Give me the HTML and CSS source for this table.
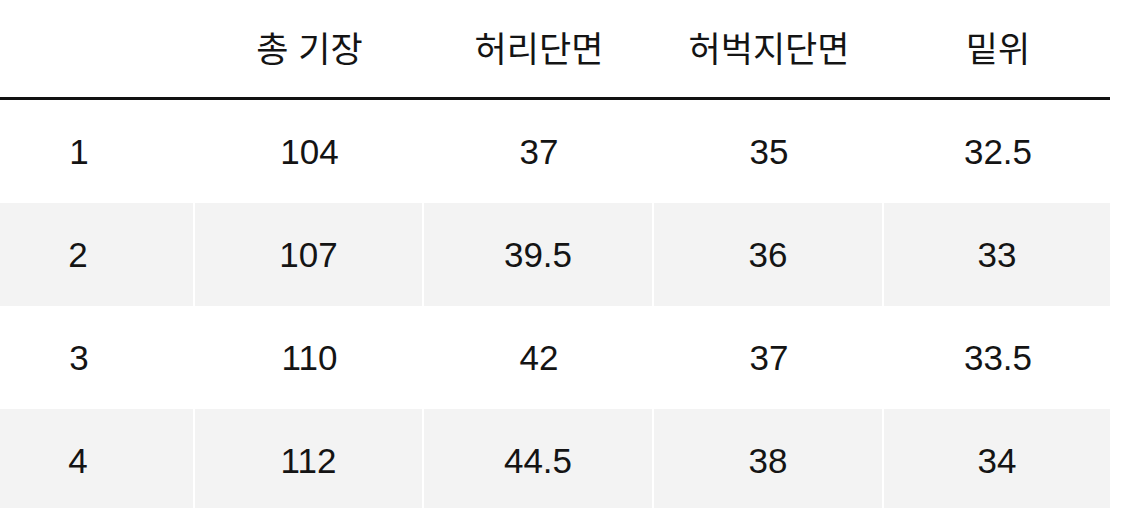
FILE: index.html
```html
<!DOCTYPE html>
<html lang="ko">
<head>
<meta charset="utf-8">
<title>사이즈표</title>
<link rel="stylesheet" href="styles.css">
</head>
<body>
<div class="size-table">
  <div class="row head">
    <div class="cell first"></div>
    <div class="cell">총 기장</div>
    <div class="cell">허리단면</div>
    <div class="cell">허벅지단면</div>
    <div class="cell">밑위</div>
  </div>
  <div class="row light">
    <div class="cell first">1</div>
    <div class="cell">104</div>
    <div class="cell">37</div>
    <div class="cell">35</div>
    <div class="cell">32.5</div>
  </div>
  <div class="row shade">
    <div class="cell first">2</div>
    <div class="cell">107</div>
    <div class="cell">39.5</div>
    <div class="cell">36</div>
    <div class="cell">33</div>
  </div>
  <div class="row light">
    <div class="cell first">3</div>
    <div class="cell">110</div>
    <div class="cell">42</div>
    <div class="cell">37</div>
    <div class="cell">33.5</div>
  </div>
  <div class="row shade">
    <div class="cell first">4</div>
    <div class="cell">112</div>
    <div class="cell">44.5</div>
    <div class="cell">38</div>
    <div class="cell">34</div>
  </div>
</div>
</body>
</html>
```

FILE: styles.css
```css
html, body {
  margin: 0;
  padding: 0;
  background: #ffffff;
}

body {
  font-family: "Liberation Sans", "Noto Sans CJK KR", sans-serif;
  color: #141414;
  overflow: hidden;
}

.size-table {
  width: 1110px;
}

.row {
  display: grid;
  grid-template-columns: 193px 227px 228px 228px 226px;
  column-gap: 2px;
  height: 103px;
}

.row.head {
  height: 97px;
  border-bottom: 3px solid #111111;
  font-family: "Noto Sans CJK KR", sans-serif;
  border-left: 1px solid #c6c6c6;
  margin-left: -1px;
  padding-left: 1px;
}

.row.light {
  border-left: 1px solid #c6c6c6;
  margin-left: -1px;
  padding-left: 1px;
}

.cell {
  display: flex;
  align-items: center;
  justify-content: center;
  font-size: 35px;
}

.row.head .cell {
  font-size: 35px;
  padding-bottom: 4px;
}

.row.shade .cell {
  background: #f3f3f3;
}

.cell.first {
  padding-right: 37px;
}
```
